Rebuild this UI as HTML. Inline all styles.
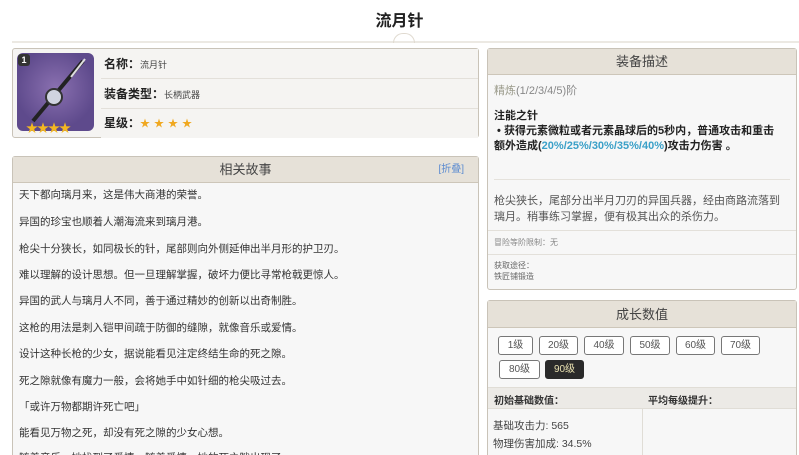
<!DOCTYPE html>
<html><head><meta charset="utf-8"><style>
*{margin:0;padding:0;box-sizing:border-box}
html,body{width:799px;height:455px;overflow:hidden}
body{background:#fff;font-family:"Liberation Sans","Noto Sans CJK SC",sans-serif;color:#333;position:relative}
.a{position:absolute}
.box{position:absolute;border:1px solid #c9c3b8;border-radius:3px;background:#f7f7f7}
.hd{position:absolute;left:0;right:0;top:0;background:#e6e1d8;border-bottom:1px solid #cdc6b9;text-align:center;font-size:13px;color:#444}
.row{position:absolute;left:88px;right:0;border-bottom:1px solid #e3e0da;font-size:12px;font-weight:bold;color:#222;padding-left:3px;background:#f5f4f2}
.row span{font-weight:normal;font-size:9px;color:#444}
.st{font-size:10.5px;color:#333;position:absolute;left:6px;white-space:nowrap}
.btn{position:absolute;height:19px;border:1px solid #777;border-radius:3px;background:#fff;font-size:10px;color:#555;text-align:center;line-height:17px}
</style></head><body>
<div class="a" style="left:0;right:0;top:7px;text-align:center;font-size:16px;font-weight:bold;color:#222">流月针</div>
<div class="a" style="left:12px;right:0;top:41px;height:2px;background:#ece9e3"></div>
<div class="a" style="left:393px;top:33px;width:22px;height:10px;border:1px solid #e0dad0;border-bottom:none;border-radius:11px 11px 0 0"></div>

<div class="box" style="left:12px;top:48px;width:467px;height:90px;background:#f5f4f2">
 <div class="a" style="left:4px;top:4px;width:77px;height:78px;border-radius:6px;background:radial-gradient(circle at 50% 45%,#8a70b0,#5e4a8c 70%)"></div>
 <div class="a" style="left:5px;top:5px;width:12px;height:12px;border-radius:3px;background:#333;color:#fff;font-size:9px;text-align:center;line-height:12px;font-weight:bold">1</div>
 <svg class="a" style="left:14px;top:8px" width="62" height="70"><line x1="6" y1="64" x2="56" y2="4" stroke="#222" stroke-width="4"/><line x1="44" y1="20" x2="58" y2="2" stroke="#ddd" stroke-width="2"/><circle cx="27" cy="40" r="8" fill="#d0d4e0" stroke="#333" stroke-width="2"/></svg>
 <div class="a" style="left:13px;top:70px;font-size:12px;color:#f4b820;letter-spacing:-1px">★★★★</div>
 <div class="row" style="top:0;height:30px;line-height:30px">名称：<span>流月针</span></div>
 <div class="row" style="top:30px;height:30px;line-height:30px">装备类型：<span>长柄武器</span></div>
 <div class="row" style="top:60px;height:29px;line-height:29px;border:none">星级：<span style="color:#f0a820;font-size:10px;letter-spacing:4px">★★★★</span></div>
</div>

<div class="box" style="left:12px;top:156px;width:467px;height:310px">
 <div class="hd" style="height:26px;line-height:26px">相关故事<span style="position:absolute;right:14px;font-size:10px;color:#5a8ad0">[折叠]</span></div>
 <div class="st" style="top:30px">天下都向璃月来，这是伟大商港的荣誉。</div>
 <div class="st" style="top:57px">异国的珍宝也顺着人潮海流来到璃月港。</div>
 <div class="st" style="top:84px">枪尖十分狭长，如同极长的针，尾部则向外侧延伸出半月形的护卫刃。</div>
 <div class="st" style="top:110px">难以理解的设计思想。但一旦理解掌握，破坏力便比寻常枪戟更惊人。</div>
 <div class="st" style="top:136px">异国的武人与璃月人不同，善于通过精妙的创新以出奇制胜。</div>
 <div class="st" style="top:163px">这枪的用法是刺入铠甲间疏于防御的缝隙，就像音乐或爱情。</div>
 <div class="st" style="top:189px">设计这种长枪的少女，据说能看见注定终结生命的死之隙。</div>
 <div class="st" style="top:216px">死之隙就像有魔力一般，会将她手中如针细的枪尖吸过去。</div>
 <div class="st" style="top:242px">「或许万物都期许死亡吧」</div>
 <div class="st" style="top:268px">能看见万物之死，却没有死之隙的少女心想。</div>
 <div class="st" style="top:293px">随着音乐，她找到了爱情。随着爱情，她的死之隙出现了。</div>
</div>

<div class="box" style="left:487px;top:48px;width:310px;height:242px">
 <div class="hd" style="height:26px;line-height:26px">装备描述</div>
 <div class="a" style="left:6px;top:33px;font-size:11px;color:#9a9a8a">精炼<span style="color:#888">(1/2/3/4/5)阶</span></div>
 <div class="a" style="left:6px;top:60px;font-size:11px;font-weight:bold;color:#222;line-height:15px;width:286px">注能之针<br>&nbsp;• 获得元素微粒或者元素晶球后的5秒内，普通攻击和重击额外造成(<span style="color:#3aa0c8">20%/25%/30%/35%/40%</span>)攻击力伤害 。</div>
 <div class="a" style="left:6px;right:6px;top:130px;height:1px;background:#e5e2dc"></div>
 <div class="a" style="left:6px;top:144px;font-size:11px;color:#555;line-height:16px;width:292px">枪尖狭长，尾部分出半月刀刃的异国兵器，经由商路流落到璃月。稍事练习掌握，便有极其出众的杀伤力。</div>
 <div class="a" style="left:0;right:0;top:181px;height:1px;background:#e3e0da"></div>
 <div class="a" style="left:6px;top:188px;font-size:8px;color:#888">冒险等阶限制：无</div>
 <div class="a" style="left:0;right:0;top:205px;height:1px;background:#e3e0da"></div>
 <div class="a" style="left:6px;top:211px;font-size:8px;color:#666;line-height:11px">获取途径：<br>铁匠铺锻造</div>
</div>

<div class="box" style="left:487px;top:300px;width:310px;height:165px">
 <div class="hd" style="height:27px;line-height:27px">成长数值</div>
 <div class="btn" style="left:10px;top:35px;width:35px">1级</div>
 <div class="btn" style="left:51px;top:35px;width:39px">20级</div>
 <div class="btn" style="left:96px;top:35px;width:40px">40级</div>
 <div class="btn" style="left:142px;top:35px;width:40px">50级</div>
 <div class="btn" style="left:188px;top:35px;width:39px">60级</div>
 <div class="btn" style="left:233px;top:35px;width:39px">70级</div>
 <div class="btn" style="left:11px;top:59px;width:41px">80级</div>
 <div class="btn" style="left:57px;top:59px;width:39px;background:#2a2a2a;border-color:#2a2a2a;color:#e8e0b0">90级</div>
 <div class="a" style="left:0;right:0;top:86px;height:22px;background:#eceae6;border-top:1px solid #e0ddd6;border-bottom:1px solid #e0ddd6"></div>
 <div class="a" style="left:6px;top:91px;font-size:10px;font-weight:bold;color:#333">初始基础数值：</div>
 <div class="a" style="left:160px;top:91px;font-size:10px;font-weight:bold;color:#333">平均每级提升：</div>
 <div class="a" style="left:154px;top:108px;width:1px;height:60px;background:#e0ddd6"></div>
 <div class="a" style="left:5px;top:116px;font-size:10.5px;color:#444;line-height:18px">基础攻击力: 565<br>物理伤害加成: 34.5%</div>
</div>
</body></html>
